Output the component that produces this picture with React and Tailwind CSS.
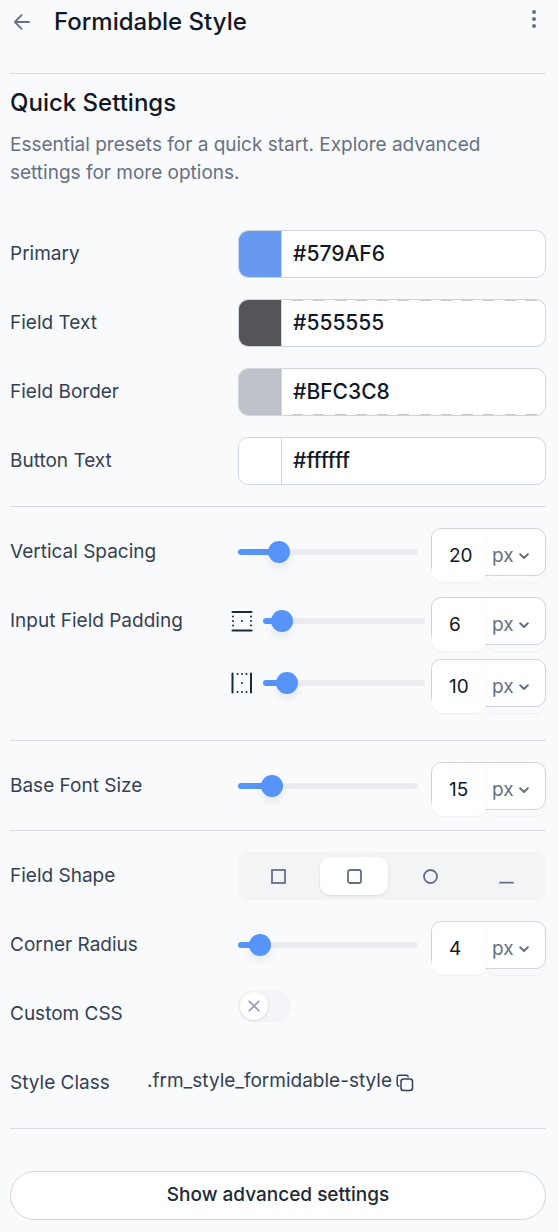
import React, { useState } from "react";

const COLORS = [
  { id: "primary", label: "Primary", value: "#579AF6", swatch: "bg-[#6899f0]" },
  { id: "field-text", label: "Field Text", value: "#555555", swatch: "bg-[#545559]", dash: "top" },
  { id: "field-border", label: "Field Border", value: "#BFC3C8", swatch: "bg-[#bfc3c9]", dash: "bottom" },
  { id: "button-text", label: "Button Text", value: "#ffffff", swatch: "bg-white" },
];

export default function App() {
  const [shape, setShape] = useState("rounded");
  const [customCss, setCustomCss] = useState(false);

  return (
    <main className="min-h-screen bg-[#f9fafc] pr-3 pb-3 pl-[10px] font-[Inter,sans-serif] text-[19px] leading-7 text-[#344054]">
      <header className="flex h-11 items-center">
        <button type="button" aria-label="Back" className="ml-1 text-[#667085]">
          <svg viewBox="0 0 16 16" className="h-4 w-4" fill="none" stroke="currentColor" strokeWidth="1.8" strokeLinecap="round" strokeLinejoin="round">
            <path d="M15 8H1M7.500 1.200L.9 8l6.600 6.800" />
          </svg>
        </button>
        <h1 className="ml-6 text-2xl font-medium text-[#101828]">Formidable Style</h1>
        <button type="button" aria-label="More options" className="mr-[10px] mb-[6px] ml-auto text-[#667085]">
          <svg viewBox="0 0 4 18" className="h-[18px] w-1" fill="currentColor">
            <circle cx="2" cy="2" r="2" />
            <circle cx="2" cy="9" r="2" />
            <circle cx="2" cy="16" r="2" />
          </svg>
        </button>
      </header>

      {/* intro */}
      <section className="mt-[29px] border-t border-[#dadce1] pt-[15px] pb-[43px]">
        <h2 className="text-2xl leading-7 font-medium text-[#101828]">Quick Settings</h2>
        <p className="mt-[14px] max-w-[500px] text-[#667085]">
          Essential presets for a quick start. Explore advanced settings for more options.
        </p>
      </section>

      {/* colors */}
      <section className="flex flex-col gap-[21px] pb-[21px]">
        {COLORS.map((c) => (
          <Row key={c.id} label={c.label} htmlFor={c.id}>
            <ColorField {...c} />
          </Row>
        ))}
      </section>

      {/* spacing */}
      <section className="border-t border-[#dadce1] pt-[21px] pb-[33px]">
        <Row label="Vertical Spacing" htmlFor="vertical-spacing">
          <SizeControl id="vertical-spacing" label="Vertical Spacing" start={20} max={105} />
        </Row>
        <div className="mt-[21px] grid grid-cols-[221px_1fr] gap-y-[14px]">
          <label htmlFor="padding-y" className="flex h-12 items-center">Input Field Padding</label>
          <SizeControl id="padding-y" label="Vertical padding" start={6} max={105} icon={<PaddingIcon />} />
          <div className="col-start-2">
            <SizeControl id="padding-x" label="Horizontal padding" start={10} max={105} icon={<PaddingIcon rotated />} />
          </div>
        </div>
      </section>

      <section className="border-t border-[#dadce1] pt-[21px] pb-5">
        <Row label="Base Font Size" htmlFor="font-size">
          <SizeControl id="font-size" label="Base Font Size" start={15} max={105} />
        </Row>
      </section>

      {/* shape, radius, css */}
      <section className="flex flex-col gap-[21px] border-t border-[#dadce1] py-[21px]">
        <Row label="Field Shape">
          <ShapePicker value={shape} onChange={setShape} />
        </Row>
        <Row label="Corner Radius" htmlFor="corner-radius">
          <SizeControl id="corner-radius" label="Corner Radius" start={4} max={56} />
        </Row>
        <Row label="Custom CSS" htmlFor="custom-css">
          <button
            id="custom-css"
            type="button"
            role="switch"
            aria-checked={customCss}
            onClick={() => setCustomCss(!customCss)}
            className={`flex h-8 w-[53px] items-center self-start rounded-full px-[2px] ${customCss ? "justify-end bg-[#5794f8]" : "bg-[#f2f4f7]"}`}
          >
            <span className="flex h-7 w-7 items-center justify-center rounded-full bg-white text-[#98a2b3] shadow">
              <svg viewBox="0 0 12 12" className="h-3 w-3" fill="none" stroke="currentColor" strokeWidth="1.8" strokeLinecap="round">
                <path d="M1.300 1.300l9.400 9.400M10.700 1.300L1.300 10.700" />
              </svg>
            </span>
          </button>
        </Row>
        <div className="flex h-12 items-center">
          <span className="w-[137px]">Style Class</span>
          <span className="mb-1">.frm_style_formidable-style</span>
          <button type="button" aria-label="Copy style class" className="ml-1">
            <svg viewBox="0 0 18 18" className="h-[18px] w-[18px]" fill="none" stroke="currentColor" strokeWidth="1.5" strokeLinejoin="round" strokeLinecap="round">
              <rect x="5" y="5" width="11.5" height="11.5" rx="2.5" />
              <path d="M2.8 12.2A1.9 1.9 0 0 1 1.2 10.300V3.200A2 2 0 0 1 3.200 1.200H10.300A1.900 1.900 0 0 1 12.200 2.800" />
            </svg>
          </button>
        </div>
      </section>

      <footer className="border-t border-[#dadce1] pt-[42px]">
        <button type="button" className="h-[49px] w-full rounded-full border border-[#d0d5dd] bg-white pb-[2px] font-medium text-[#1d2939]">
          Show advanced settings
        </button>
      </footer>
    </main>
  );
}

function Row({ label, htmlFor, children }) {
  return (
    <div className="grid h-12 grid-cols-[228px_1fr] items-center">
      {htmlFor ? <label htmlFor={htmlFor}>{label}</label> : <span>{label}</span>}
      {children}
    </div>
  );
}

function ColorField({ id, label, value, swatch, dash }) {
  return (
    <div className="relative flex h-12 overflow-hidden rounded-[10px] border border-[#d0d5dd] bg-white">
      <button type="button" aria-label={`Pick ${label} color`} className={`w-[43px] shrink-0 border-r border-[#d0d5dd] ${swatch}`} />
      <input
        id={id}
        type="text"
        defaultValue={value}
        className="w-full min-w-0 bg-transparent px-[11px] text-[21px] font-medium text-[#101828] outline-none"
      />
      {dash && (
        <div className={`pointer-events-none absolute right-2 left-[53px] flex justify-between ${dash === "top" ? "top-0" : "bottom-0"}`}>
          {Array.from({ length: 12 }, (_, i) => (
            <span key={i} className="h-px w-[11px] bg-[#c8c8cc]" />
          ))}
        </div>
      )}
    </div>
  );
}

function SizeControl({ id, label, start, max, icon }) {
  const [value, setValue] = useState(start);
  const pct = (value / max) * 100;

  return (
    <div className={`flex h-12 items-center ${icon ? "gap-[6px]" : "gap-[13px]"}`}>
      <div className="flex min-w-0 flex-1 items-center gap-[10px]">
        {icon}
        <input
          type="range"
          aria-label={label}
          min="0"
          max={max}
          value={value}
          onChange={(e) => setValue(Number(e.target.value))}
          style={{ backgroundImage: `linear-gradient(to right, #5794f8 ${pct + 3}%, #eaecf0 ${pct + 3}%)` }}
          className="h-[6px] w-full min-w-0 appearance-none rounded-full [&::-webkit-slider-thumb]:h-[22px] [&::-webkit-slider-thumb]:w-[22px] [&::-webkit-slider-thumb]:appearance-none [&::-webkit-slider-thumb]:rounded-full [&::-webkit-slider-thumb]:bg-[#5794f8] [&::-webkit-slider-thumb]:shadow-[0_5px_8px_rgba(16,24,40,0.08)]"
        />
      </div>
      <div className="flex h-12 w-[115px] shrink-0 items-start rounded-[10px] border border-[#d0d5dd] bg-white">
        <input
          id={id}
          type="text"
          inputMode="numeric"
          value={value}
          onChange={(e) => setValue(Number(e.target.value) || 0)}
          className="h-[53px] w-[54px] shrink-0 rounded-[10px] bg-white pl-[17px] text-[#101828] shadow-[0_1px_2px_rgba(16,24,40,0.05)] outline-none"
        />
        <div className="relative flex-1">
          <select
            aria-label={`${label} unit`}
            defaultValue="px"
            className="h-[53px] w-full appearance-none rounded-[10px] bg-transparent pl-[6px] text-[#667085] shadow-[0_1px_2px_rgba(16,24,40,0.05)] outline-none"
          >
            <option>px</option>
            <option>em</option>
            <option>%</option>
          </select>
          <svg viewBox="0 0 10 7" className="pointer-events-none absolute top-6 right-4 h-[7px] w-[10px] text-[#667085]" fill="none" stroke="currentColor" strokeWidth="2" strokeLinecap="round" strokeLinejoin="round">
            <path d="M1.200 1.200L5 5l3.800-3.800" />
          </svg>
        </div>
      </div>
    </div>
  );
}

function PaddingIcon({ rotated }) {
  return (
    <svg viewBox="0 0 22 22" className={`h-[22px] w-[22px] shrink-0 text-[#1d2939] ${rotated ? "rotate-90" : ""}`} fill="currentColor">
      <path d="M1.500 2h19M1.500 20.500h19" stroke="currentColor" strokeWidth="2" strokeLinecap="round" />
      {[6.5, 11, 15.5].map((y) => (
        <g key={y}>
          <circle cx="2" cy={y} r="1" />
          <circle cx="20" cy={y} r="1" />
        </g>
      ))}
      <circle cx="11" cy="11" r="1" />
    </svg>
  );
}

const SHAPES = [
  { id: "square", label: "Square", draw: <rect x="1" y="1" width="13" height="13" /> },
  { id: "rounded", label: "Rounded", draw: <rect x="1" y="1" width="13" height="13" rx="2" /> },
  { id: "circle", label: "Circle", draw: <circle cx="7.5" cy="7.5" r="6.5" /> },
  { id: "underline", label: "Underline", draw: <path d="M1 13.700h13" strokeLinecap="round" /> },
];

function ShapePicker({ value, onChange }) {
  return (
    <div role="group" aria-label="Field Shape" className="flex h-12 items-center gap-2 rounded-[10px] bg-[#f2f4f6] px-[6px]">
      {SHAPES.map((s) => (
        <button
          key={s.id}
          type="button"
          aria-label={s.label}
          aria-pressed={value === s.id}
          onClick={() => onChange(s.id)}
          className={`flex h-[38px] flex-1 items-center justify-center rounded-[10px] text-[#667085] ${value === s.id ? "bg-white shadow" : ""}`}
        >
          <svg viewBox="0 0 15 15" className="h-[15px] w-[15px]" fill="none" stroke="currentColor" strokeWidth="1.8">
            {s.draw}
          </svg>
        </button>
      ))}
    </div>
  );
}
